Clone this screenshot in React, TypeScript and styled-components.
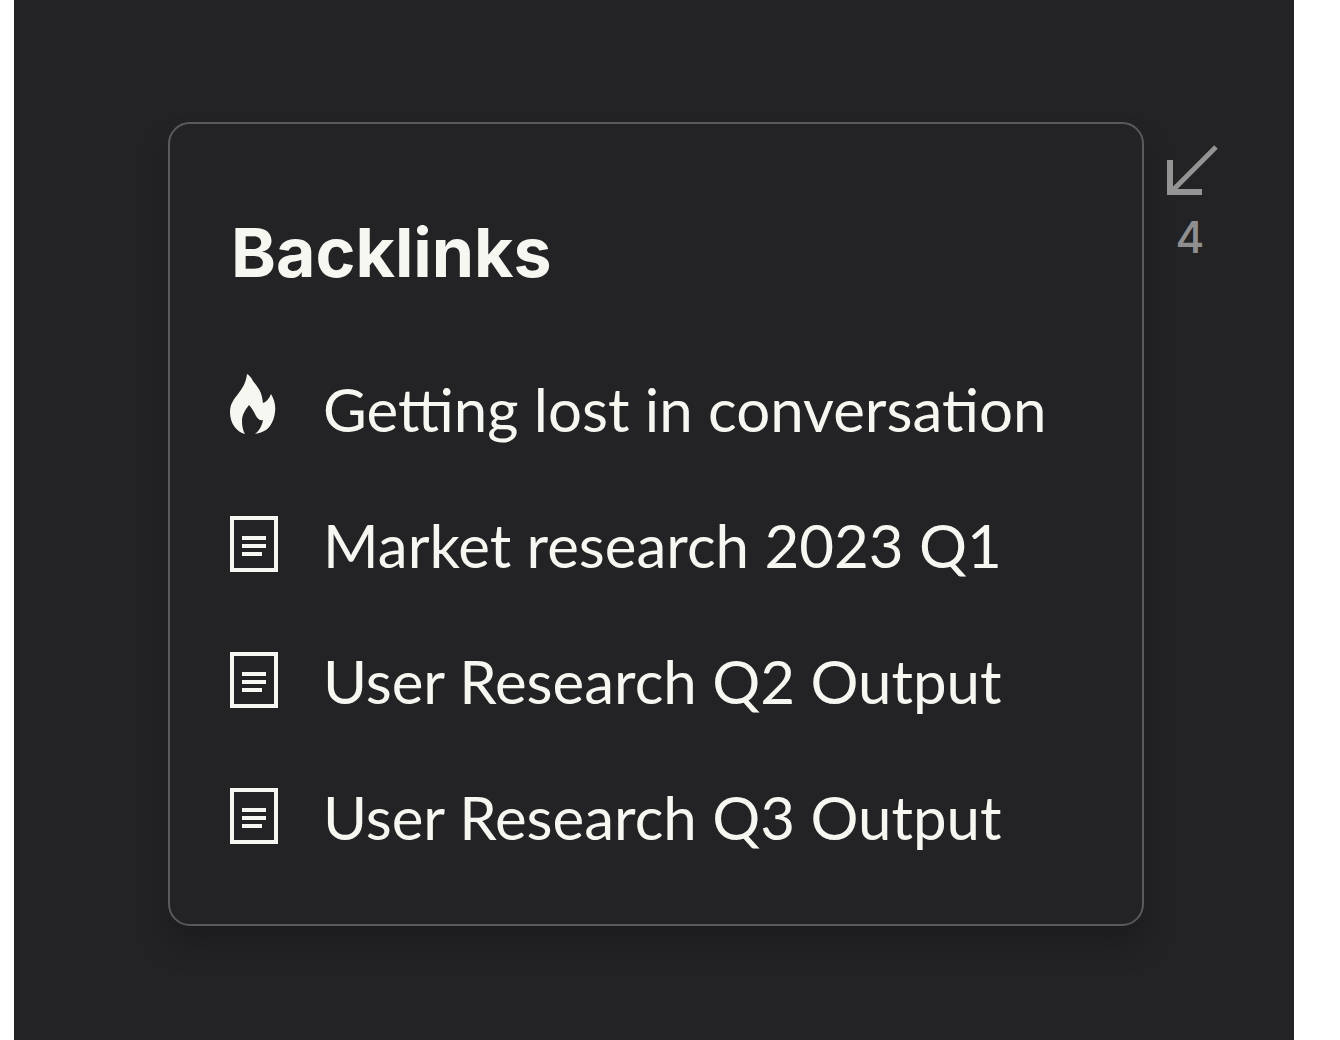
import React from "react";
import styled, { createGlobalStyle } from "styled-components";

const GlobalStyle = createGlobalStyle`
  html, body {
    margin: 0;
    padding: 0;
    background: #ffffff;
  }
`;

const links = [
  { id: 1, kind: "fire", title: "Getting lost in conversation" },
  { id: 2, kind: "doc", title: "Market research 2023 Q1" },
  { id: 3, kind: "doc", title: "User Research Q2 Output" },
  { id: 4, kind: "doc", title: "User Research Q3 Output" },
];

const FireIcon = () => (
  <svg width="48" height="68" viewBox="0 0 48 68">
    <path
      fill="#f7f7f2"
      d="M17 0 C19 1 21 3 23 7 C27 12 31 17 32 23 L33 29 C36 28 39 25 41 20 C44 25 46 31 45 38 C44 46 41 52 36 56 C33 58 29 59 25 60 C29 57 32 52 33 46 C30 47 28 45 26 42 C24 38 22 34 19 31 C15 36 12 41 12 47 C12 52 13 57 15 60 C7 58 0 50 0 38 C0 30 4 25 8 20 C12 15 16 9 17 0 Z"
    />
  </svg>
);

const DocIcon = () => (
  <svg width="48" height="56" viewBox="0 0 48 56">
    <rect x="2" y="2" width="44" height="52" fill="none" stroke="#f7f7f2" strokeWidth="4" />
    <rect x="12" y="20" width="24" height="4" fill="#f7f7f2" />
    <rect x="12" y="28" width="24" height="4" fill="#f7f7f2" />
    <rect x="12" y="36" width="20" height="4" fill="#f7f7f2" />
  </svg>
);

const ArrowIcon = () => (
  <svg width="52" height="52" viewBox="0 0 52 52">
    <path d="M50 2 L5 47" fill="none" stroke="#949494" strokeWidth="5" />
    <path d="M4 15 V47 H36" fill="none" stroke="#949494" strokeWidth="6" />
  </svg>
);

const App = () => {
  return (
    <>
      <GlobalStyle />
      <Page>
        <Panel>
          <Card>
            <Title>Backlinks</Title>
            <LinkList>
              {links.map((link) => (
                <LinkRow key={link.id}>
                  <IconSlot>{link.kind === "fire" ? <FireIcon /> : <DocIcon />}</IconSlot>
                  <LinkTitle>{link.title}</LinkTitle>
                </LinkRow>
              ))}
            </LinkList>
          </Card>
          <Counter>
            <ArrowIcon />
            <Count>4</Count>
          </Counter>
        </Panel>
      </Page>
    </>
  );
};

export default App;

const Page = styled.div`
  width: 1340px;
  height: 1040px;
  overflow: hidden;
  padding-left: 14px;
  box-sizing: border-box;
`;

const Panel = styled.div`
  width: 1280px;
  height: 1040px;
  box-sizing: border-box;
  background-color: #232225;
  padding: 122px 0 0 154px;
  display: flex;
  align-items: flex-start;
  gap: 22px;
`;

const Card = styled.div`
  width: 976px;
  height: 804px;
  box-sizing: border-box;
  flex-shrink: 0;
  background-color: #232225;
  border: 2px solid #5a595c;
  border-radius: 22px;
  box-shadow: 0 20px 30px rgba(0, 0, 0, 0.2);
  padding: 90px 0 0 60px;
`;

const Title = styled.div`
  font-family: Inter, "Liberation Sans", sans-serif;
  font-weight: 700;
  font-size: 68px;
  line-height: 76px;
  padding-left: 1px;
  color: #f7f7f2;
`;

const LinkList = styled.div`
  margin-top: 78px;
  display: flex;
  flex-direction: column;
  gap: 56px;
`;

const LinkRow = styled.div`
  display: flex;
  align-items: center;
  height: 80px;
  gap: 45px;
`;

const IconSlot = styled.div`
  width: 48px;
  height: 68px;
  display: flex;
  align-items: center;
  justify-content: center;
  flex-shrink: 0;
`;

const LinkTitle = styled.div`
  font-family: Lato, "Liberation Sans", sans-serif;
  font-size: 60px;
  line-height: 80px;
  padding-top: 2px;
  color: #f7f7f2;
  white-space: nowrap;
`;

const Counter = styled.div`
  display: flex;
  flex-direction: column;
  align-items: center;
  width: 52px;
  padding-top: 23px;
  flex-shrink: 0;
`;

const Count = styled.div`
  font-family: Inter, "Liberation Sans", sans-serif;
  font-weight: 500;
  font-size: 44px;
  line-height: 52px;
  color: #8f8f8f;
  margin-top: 14px;
  margin-right: 4px;
`;
